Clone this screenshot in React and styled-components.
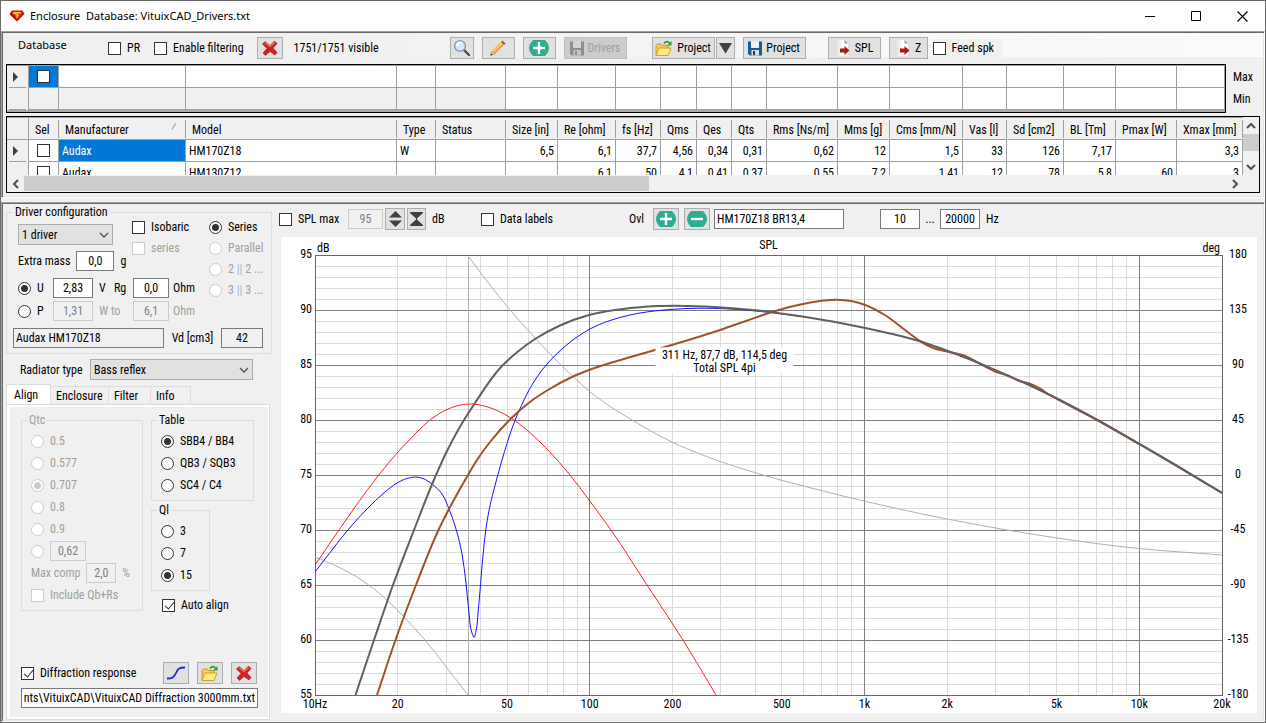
import React, { useEffect, useRef, useState } from "react";
import styled, { createGlobalStyle, css } from "styled-components";

const columns = [
  { name: "Sel", width: 30 },
  { name: "Manufacturer", width: 127, sorted: true },
  { name: "Model", width: 211 },
  { name: "Type", width: 39 },
  { name: "Status", width: 70 },
  { name: "Size [in]", width: 52, numeric: true },
  { name: "Re [ohm]", width: 58, numeric: true },
  { name: "fs [Hz]", width: 45, numeric: true },
  { name: "Qms", width: 36, numeric: true },
  { name: "Qes", width: 35, numeric: true },
  { name: "Qts", width: 35, numeric: true },
  { name: "Rms [Ns/m]", width: 71, numeric: true },
  { name: "Mms [g]", width: 52, numeric: true },
  { name: "Cms [mm/N]", width: 73, numeric: true },
  { name: "Vas [l]", width: 44, numeric: true },
  { name: "Sd [cm2]", width: 57, numeric: true },
  { name: "BL [Tm]", width: 52, numeric: true },
  { name: "Pmax [W]", width: 61, numeric: true },
  { name: "Xmax [mm]", numeric: true },
];

const drivers = [
  ["Audax", "HM170Z18", "W", "", "6,5", "6,1", "37,7", "4,56", "0,34", "0,31", "0,62", "12", "1,5", "33", "126", "7,17", "", "3,3"],
  ["Audax", "HM130Z12", "", "", "", "6,1", "50", "4,1", "0,41", "0,37", "0,55", "7,2", "1,41", "12", "78", "5,8", "60", "3"],
];

const curves = [
  {
    name: "Phase, low",
    color: "#b0b0b0",
    width: 1,
    points: [[315, 557], [333, 564.5], [352, 574], [370, 586], [388, 601], [403, 616], [425, 640], [447, 668], [468, 695]],
  },
  {
    name: "Phase",
    color: "#b0b0b0",
    width: 1,
    points: [[469, 257], [480, 272], [510, 310], [535, 338], [553, 357], [573, 376.5], [589, 391], [632, 420], [670, 441], [716, 460], [763, 475], [823, 491], [864, 501], [947, 519], [1007, 530], [1057, 538], [1096, 543.5], [1139, 548.5], [1222, 555]],
  },
  {
    name: "Port",
    color: "#ff2020",
    width: 1,
    points: [[315, 565], [339, 530], [378, 476], [391, 460], [417, 432], [430, 420], [447, 409.5], [457, 405.8], [469, 404], [481, 405.2], [497, 410.5], [511, 418], [528, 431], [548, 450], [570, 475], [589, 500], [611, 530], [647, 585], [683, 640], [716, 695]],
  },
  {
    name: "Driver",
    color: "#1414ff",
    width: 1,
    points: [[315, 572], [332, 550], [347, 531], [367, 509], [385, 492], [397, 483], [407, 478.5], [416, 477], [423, 478.5], [432, 484], [442, 494], [449, 509], [456, 529], [462, 554], [466, 583], [469, 613], [472, 633], [474, 637.5], [476, 631], [478, 613], [480.5, 585], [484, 545], [488.5, 513], [497, 478], [502, 460], [507, 443.5], [515.5, 419], [521, 406.5], [528.5, 391], [547, 364], [563, 348], [577, 337], [589, 329.5], [610, 320.5], [630, 315], [650, 311.5], [670, 309.5], [699, 308.2], [726, 308.8], [756, 311], [776, 313.2], [804, 316.8]],
  },
  {
    name: "Total SPL 4pi",
    color: "#a0522d",
    width: 2,
    points: [[377, 695], [395.5, 640], [416, 585], [438.5, 530], [468, 475], [477, 460], [490, 442], [511, 418.5], [528, 403.5], [547, 390.5], [573, 376.5], [589, 370], [617, 361], [653, 350.5], [695, 338], [720, 330], [746, 321], [772, 312], [804, 303.7], [822, 300.8], [837, 299.8], [851, 301], [864.5, 304.7], [884, 314.5], [907, 331.5], [924, 343.5], [936, 349], [948, 351.8], [965, 356], [981, 364.3], [995, 371.5], [1008, 375.7], [1018, 380.5], [1029, 383.5], [1041, 389], [1048, 394], [1057, 399], [1097, 420], [1139, 444], [1222, 493]],
  },
  {
    name: "Half space SPL",
    color: "#606060",
    width: 2,
    points: [[355.5, 695], [374, 640], [393, 585], [414, 530], [436, 475], [448, 449], [464, 420], [474, 404.5], [502, 366], [518, 351.5], [535, 339], [560, 325.5], [589, 315], [617, 309.7], [645, 306.7], [675, 305.8], [705, 306.6], [753, 310], [804, 316.8], [864, 327.7], [924, 342.5], [948, 351], [995, 369.8], [1029, 385], [1057, 398.5], [1097, 419.7], [1139, 443.7], [1193, 475.3], [1222, 493]],
  },
];

// Hermite spline with tangents weighted by the distance between the points
function smoothPath(points) {
  const step = points.slice(1).map((p, i) => Math.hypot(p[0] - points[i][0], p[1] - points[i][1]));
  const slope = (i, axis) => (points[i + 1][axis] - points[i][axis]) / step[i];
  const tangent = (i, axis) => {
    if (i === 0) return slope(0, axis);
    if (i === points.length - 1) return slope(i - 1, axis);
    return (slope(i - 1, axis) * step[i] + slope(i, axis) * step[i - 1]) / (step[i - 1] + step[i]);
  };
  let d = `M${points[0].join(" ")}`;
  step.forEach((length, i) => {
    const c1 = [0, 1].map((axis) => (points[i][axis] + (tangent(i, axis) * length) / 3).toFixed(1));
    const c2 = [0, 1].map((axis) => (points[i + 1][axis] - (tangent(i + 1, axis) * length) / 3).toFixed(1));
    d += `C${c1.join(" ")} ${c2.join(" ")} ${points[i + 1].join(" ")}`;
  });
  return d;
}

/* ---------- icons ---------- */

const GemIcon = () => (
  <svg width="16" height="16" viewBox="0 0 16 16">
    <path d="M3 2.5h10.500l2 3.500L8 13.500 .500 6z" fill="#c8140a" />
    <path d="M.5 6h4.500L8 13z" fill="#8e0d06" />
    <path d="M4 3.500h8l1.500 2.500L8 11.500 2.800 6z" fill="#e8280e" />
    <path d="M4.500 4h7.500l-.5 1.500H6.500l3.500 1.500-2 3.500-1-2.500 1-.8L4 5.500z" fill="#ffd02a" />
  </svg>
);

const CrossIcon = () => (
  <svg width="18" height="18" viewBox="0 0 18 18">
    <path d="M4 2.500 9 6.500l4.500-4.500 2.500 2.500-4 4.500 4 4.500-2 2.500-5-3.500-4.500 4-2.500-2.500 4-4.500L1.500 5z" fill="#cf2222" stroke="#a51414" strokeWidth=".6" strokeLinejoin="round" />
    <path d="M4 3.500 9 7.500l4.500-4" fill="none" stroke="#ee7a74" strokeWidth="1.200" />
  </svg>
);

const SearchIcon = () => (
  <svg width="18" height="18" viewBox="0 0 18 18">
    <path d="m11 11 5 5" stroke="#4a4a4a" strokeWidth="2.400" strokeLinecap="round" />
    <circle cx="7" cy="7" r="5.400" fill="#d6e6fb" stroke="#8c94b8" strokeWidth="1.400" />
    <path d="M3.800 7A3.500 3.500 0 0 1 9 4" fill="none" stroke="#fff" strokeWidth="1.600" />
  </svg>
);

const PencilIcon = () => (
  <svg width="18" height="18" viewBox="0 0 18 18">
    <path d="m1.500 16.500 1.500-4.500 3 3z" fill="#e9c9a0" stroke="#8a6a4a" strokeWidth=".5" />
    <path d="m1.500 16.500.7-2 1.300 1.300z" fill="#333" />
    <path d="M3 12 12 3l3 3-9 9z" fill="#f0a030" />
    <path d="m4 13 9-9" stroke="#ffd58a" strokeWidth="1.200" />
    <path d="m12 3 1.500-1.500 3 3L15 6z" fill="#a05a48" />
  </svg>
);

const RoundIcon = ({ minus }) => (
  <svg width="20" height="16" viewBox="0 0 20 16">
    <path d="M4 0h12q4 4 4 8t-4 8H4Q0 12 0 8t4-8z" fill="#2eae90" />
    <path d={minus ? "M4 8h12" : "M4 8h12M10 2v12"} stroke="#fff" strokeWidth="2.400" />
  </svg>
);

const FloppyIcon = ({ disabled }) => (
  <svg width="14" height="15" viewBox="0 0 14 15">
    <path d="M0 .5h3V7h8V.5h3v14H2L0 13z" fill={disabled ? "#8e8e8e" : "#1d5a8e"} />
    <path d="M3 .5h8v6H3z" fill={disabled ? "#d4d4d4" : "#eef5fa"} />
    <path d="M3.500 9h7.500v5.500H3.500z" fill={disabled ? "#c4c4c4" : "#d4dee6"} />
    <path d="M5 10h2v4H5z" fill={disabled ? "#8e8e8e" : "#17405f"} />
  </svg>
);

const FolderIcon = () => (
  <svg width="18" height="17" viewBox="0 0 18 17">
    <path d="M1 15V5.500L2.500 4H6l1.500 1.500H13V8" fill="#f3cf55" stroke="#b98a14" strokeWidth=".8" />
    <path d="M1 15.500 4 8h12l-3 7.500z" fill="#ffe784" stroke="#c2921a" strokeWidth=".8" strokeLinejoin="round" />
    <path d="M9 3.500c1.500-2.500 4-2.500 5.500-.5" fill="none" stroke="#2c9a2c" strokeWidth="1.700" />
    <path d="M16.500 1v4.500H12z" fill="#2c9a2c" />
  </svg>
);

const ExportIcon = () => (
  <svg width="16" height="17" viewBox="0 0 16 17">
    <defs>
      <linearGradient id="sheet" x1="0" x2="1">
        <stop offset="0" stopColor="#dcdcdc" />
        <stop offset=".6" stopColor="#fff" />
      </linearGradient>
    </defs>
    <path d="M0 0h9.500L13 3.500V16H0z" fill="url(#sheet)" />
    <path d="M9.500 0 13 3.500H9.500z" fill="#9a9a9a" />
    <path d="M5 8.500h4.500V6L14.500 10.500 9.500 15v-2.500H5z" fill="#b01818" />
  </svg>
);

const CurveIcon = () => (
  <svg width="20" height="14" viewBox="0 0 20 14">
    <path d="M1 12.500c5 0 7-1 9-5.500s3.500-5.500 9-5.500" fill="none" stroke="#2222f0" strokeWidth="1.800" />
  </svg>
);

const DownIcon = () => (
  <svg width="13" height="11" viewBox="0 0 13 11">
    <path d="M0 0h13L6.500 10.500z" fill="#404040" />
  </svg>
);

const SpreadIcon = () => (
  <svg width="13" height="16" viewBox="0 0 13 16">
    <path d="M0 6.500 6.500 0 13 6.500zM0 9.500h13L6.500 16z" fill="#404040" />
  </svg>
);

const FitIcon = () => (
  <svg width="13" height="16" viewBox="0 0 13 16">
    <path d="M0 1h13v1L7 7.500v1L13 14v1H0v-1l6-5.500v-1L0 2z" fill="#404040" />
  </svg>
);

const Chevron = ({ dir = "down", bold }) => {
  const d = { down: "m1 3 4 4 4-4", up: "m1 7 4-4 4 4", left: "M7 1 3 5l4 4", right: "m3 1 4 4-4 4" }[dir];
  return (
    <svg width="10" height="10" viewBox="0 0 10 10">
      <path d={d} fill="none" stroke="#505050" strokeWidth={bold ? 2 : 1.3} />
    </svg>
  );
};

/* ---------- small parts ---------- */

function Check({ children, ...rest }) {
  return (
    <StOption disabled={rest.disabled}>
      <StTick type="checkbox" {...rest} />
      <span>{children}</span>
    </StOption>
  );
}

function Radio({ children, ...rest }) {
  return (
    <StOption disabled={rest.disabled}>
      <StDot type="radio" {...rest} />
      <span>{children}</span>
    </StOption>
  );
}

function Select({ width, options, ...rest }) {
  return (
    <StSelectWrapper width={width}>
      <select {...rest}>
        {options.map((option) => (
          <option key={option}>{option}</option>
        ))}
      </select>
      <Chevron />
    </StSelectWrapper>
  );
}

function ColumnSizes() {
  return (
    <colgroup>
      <StCol width={22} />
      {columns.map((column) => (
        <StCol key={column.name} width={column.width} />
      ))}
    </colgroup>
  );
}

function FilterGrid() {
  return (
    <StFilterRow>
      <StGridFrame>
        <StTable aria-label="Filter limits">
          <ColumnSizes />
          <tbody>
            <tr>
              <StRowHead>
                <StMarker />
              </StRowHead>
              <StCell selected center>
                <StTick type="checkbox" aria-label="Selected only" />
              </StCell>
              {columns.slice(1).map((column) => (
                <StCell key={column.name} />
              ))}
            </tr>
            <tr>
              <StRowHead />
              {columns.map((column) => (
                <StCell key={column.name} shaded={!column.numeric} />
              ))}
            </tr>
          </tbody>
        </StTable>
        <StGridFiller />
      </StGridFrame>
      <StLimits>
        <span>Max</span>
        <span>Min</span>
      </StLimits>
    </StFilterRow>
  );
}

function DriverGrid() {
  return (
    <StDriverFrame>
      <StViewport>
        <StTable aria-label="Drivers">
          <ColumnSizes />
          <thead>
            <tr>
              <StCorner aria-label="Row" />
              {columns.map((column) => (
                <StHeadCell key={column.name}>
                  <div>
                    {column.name}
                    {column.sorted && (
                      <svg width="6" height="7" viewBox="0 0 6 7">
                        <path d="M1 6.500 4.500.5" stroke="#8a8a8a" />
                      </svg>
                    )}
                  </div>
                </StHeadCell>
              ))}
            </tr>
          </thead>
          <tbody>
            {drivers.map((driver, row) => (
              <tr key={driver[1]}>
                <StRowHead>{row === 0 && <StMarker />}</StRowHead>
                <StCell center>
                  <StTick type="checkbox" aria-label={"Select " + driver[1]} />
                </StCell>
                {driver.map((value, i) => (
                  <StCell key={columns[i + 1].name} numeric={columns[i + 1].numeric} selected={row === 0 && i === 0}>
                    {value}
                  </StCell>
                ))}
              </tr>
            ))}
          </tbody>
        </StTable>
      </StViewport>
      <StVScroll>
        <button aria-label="Scroll up">
          <Chevron dir="up" bold />
        </button>
        <StVThumb />
        <button aria-label="Scroll down">
          <Chevron bold />
        </button>
      </StVScroll>
      <StHScroll>
        <button aria-label="Scroll left">
          <Chevron dir="left" bold />
        </button>
        <StHTrack>
          <StHThumb />
        </StHTrack>
        <button aria-label="Scroll right">
          <Chevron dir="right" bold />
        </button>
      </StHScroll>
    </StDriverFrame>
  );
}

function DriverConfiguration() {
  return (
    <StGroup>
      <legend>Driver configuration</legend>
      <StConfigBody>
        <StConfigMain>
          <StConfigTop>
            <StConfigLeft>
              <Select width={95} options={["1 driver", "2 drivers"]} aria-label="Number of drivers" />
              <StField>
                <label htmlFor="mass">Extra mass</label>
                <StInput id="mass" width={38} defaultValue="0,0" />
                <span>g</span>
              </StField>
            </StConfigLeft>
            <StOptionColumn>
              <Check>Isobaric</Check>
              <Check disabled>series</Check>
            </StOptionColumn>
          </StConfigTop>
          <StSourceRow>
            <Radio name="source" defaultChecked>
              U
            </Radio>
            <StInput width={40} defaultValue="2,83" aria-label="Voltage" />
            <span>V</span>
            <label htmlFor="rg">Rg</label>
            <StInput id="rg" width={36} defaultValue="0,0" />
            <span>Ohm</span>
          </StSourceRow>
          <StSourceRow muted>
            <Radio name="source">
              <StStrong>P</StStrong>
            </Radio>
            <StInput width={40} defaultValue="1,31" aria-label="Power" disabled />
            <label htmlFor="load">W to</label>
            <i />
            <StInput id="load" width={36} defaultValue="6,1" disabled />
            <span>Ohm</span>
          </StSourceRow>
        </StConfigMain>
        <StOptionColumn>
          <Radio name="wiring" defaultChecked>
            Series
          </Radio>
          <Radio name="wiring" disabled>
            Parallel
          </Radio>
          <Radio name="wiring" disabled>
            2 <StBars>||</StBars> 2 ...
          </Radio>
          <Radio name="wiring" disabled>
            3 <StBars>||</StBars> 3 ...
          </Radio>
        </StOptionColumn>
      </StConfigBody>
      <StNameRow>
        <StInput width={151} left defaultValue="Audax HM170Z18" readOnly aria-label="Driver" />
        <label htmlFor="vd">Vd [cm3]</label>
        <StInput id="vd" width={42} defaultValue="42" readOnly />
      </StNameRow>
    </StGroup>
  );
}

function AlignTab() {
  const fileRef = useRef(null);

  // keep the file name in view, not the start of its path
  useEffect(() => {
    fileRef.current.scrollLeft = fileRef.current.scrollWidth;
  }, []);

  return (
    <StTabPage>
      <StTabContent>
        <StAlignGroups>
          <StListGroup width={122} muted>
            <legend>Qtc</legend>
            {["0.5", "0.577", "0.707", "0.8", "0.9"].map((value) => (
              <Radio key={value} name="qtc" defaultChecked={value === "0.707"} disabled>
                {value}
              </Radio>
            ))}
            <StField>
              <StDot type="radio" name="qtc" aria-label="Custom Qtc" disabled />
              <StInput width={36} defaultValue="0,62" aria-label="Qtc value" disabled />
            </StField>
            <StField>
              <label htmlFor="comp">Max comp</label>
              <StInput id="comp" width={30} defaultValue="2,0" disabled />
              <span>%</span>
            </StField>
            <Check disabled>Include Qb+Rs</Check>
          </StListGroup>
          <StAlignColumn>
            <StListGroup width={103}>
              <legend>Table</legend>
              {["SBB4 / BB4", "QB3 / SQB3", "SC4 / C4"].map((value, i) => (
                <Radio key={value} name="table" defaultChecked={i === 0}>
                  {value}
                </Radio>
              ))}
            </StListGroup>
            <StListGroup width={59}>
              <legend>Ql</legend>
              {["3", "7", "15"].map((value) => (
                <Radio key={value} name="ql" defaultChecked={value === "15"}>
                  {value}
                </Radio>
              ))}
            </StListGroup>
            <StAutoAlign>
              <Check defaultChecked>Auto align</Check>
            </StAutoAlign>
          </StAlignColumn>
        </StAlignGroups>
        <StDiffraction>
          <StDiffractionRow>
            <Check defaultChecked>Diffraction response</Check>
            <StButton width={26} aria-label="Show response">
              <CurveIcon />
            </StButton>
            <StButton width={26} aria-label="Open response">
              <FolderIcon />
            </StButton>
            <StButton width={26} aria-label="Clear response">
              <CrossIcon />
            </StButton>
          </StDiffractionRow>
          <StInput ref={fileRef} width={237} left defaultValue="ents\VituixCAD\VituixCAD Diffraction 3000mm.txt" aria-label="Response file" />
        </StDiffraction>
      </StTabContent>
    </StTabPage>
  );
}

const margin = { left: 34, top: 18, right: 35, bottom: 18 };
const freqLabels = [[10, "10Hz"], [20, "20"], [50, "50"], [100, "100"], [200, "200"], [500, "500"], [1000, "1k"], [2000, "2k"], [5000, "5k"], [10000, "10k"], [20000, "20k"]];

function SplChart() {
  const ref = useRef(null);
  const [size, setSize] = useState({ width: 976, height: 476 });

  useEffect(() => {
    const observer = new ResizeObserver(([entry]) => {
      const { width, height } = entry.contentRect;
      setSize({ width, height });
    });
    observer.observe(ref.current);
    return () => observer.disconnect();
  }, []);

  const plotWidth = size.width - margin.left - margin.right;
  const plotHeight = size.height - margin.top - margin.bottom;
  const right = margin.left + plotWidth;
  const bottom = margin.top + plotHeight;
  const fx = (hz) => margin.left + (Math.log10(hz / 10) / Math.log10(2000)) * plotWidth;
  const dy = (db) => margin.top + ((95 - db) / 40) * plotHeight;

  const freqs = [];
  for (let decade = 10; decade <= 10000; decade *= 10) {
    for (let n = 1; n < 10; n++) {
      if (decade * n > 10 && decade * n < 20000) freqs.push(decade * n);
    }
  }
  const levels = Array.from({ length: 39 }, (_, i) => 56 + i);
  const majorFreqs = [100, 1000, 10000];
  const majorLevels = [60, 65, 70, 75, 80, 85, 90];
  const tipX = margin.left + plotWidth * 0.4515;
  const tipY = dy(87.7);

  return (
    <StChart ref={ref}>
      <svg width={size.width} height={size.height} role="img" aria-label="SPL">
        <g stroke="#dcdcdc" shapeRendering="crispEdges">
          {freqs.map((hz) => (
            <line key={hz} x1={Math.floor(fx(hz)) + 0.5} x2={Math.floor(fx(hz)) + 0.5} y1={margin.top} y2={bottom} />
          ))}
          {levels.map((db) => (
            <line key={db} x1={margin.left} x2={right} y1={Math.floor(dy(db)) + 0.5} y2={Math.floor(dy(db)) + 0.5} />
          ))}
        </g>
        <g stroke="#808080" shapeRendering="crispEdges">
          {majorFreqs.map((hz) => (
            <line key={hz} x1={Math.floor(fx(hz)) + 0.5} x2={Math.floor(fx(hz)) + 0.5} y1={margin.top} y2={bottom} />
          ))}
          {majorLevels.map((db) => (
            <line key={db} x1={margin.left} x2={right} y1={Math.floor(dy(db)) + 0.5} y2={Math.floor(dy(db)) + 0.5} />
          ))}
        </g>
        <rect x={margin.left + 0.5} y={margin.top + 0.5} width={plotWidth} height={plotHeight} fill="none" stroke="#696969" shapeRendering="crispEdges" />
        <svg x={margin.left} y={margin.top} width={plotWidth} height={plotHeight} viewBox="315 255 907 440" preserveAspectRatio="none">
          <path d="M468.500 257V695" stroke="#b0b0b0" />
          {curves.map((curve) => (
            <path key={curve.name} d={smoothPath(curve.points)} fill="none" stroke={curve.color} strokeWidth={curve.width} vectorEffect="non-scaling-stroke" />
          ))}
        </svg>
        <rect x={tipX - 69} y={tipY + 12} width="138" height="26" fill="#fff" />
        <g textAnchor="middle">
          <text x={tipX} y={tipY + 24}>311 Hz, 87,7 dB, 114,5 deg</text>
          <text x={tipX} y={tipY + 37}>Total SPL 4pi</text>
          <text x={margin.left + plotWidth / 2} y="12">SPL</text>
          {freqLabels.map(([hz, label]) => (
            <text key={hz} x={fx(hz)} y={bottom + 13}>{label}</text>
          ))}
          {[180, 135, 90, 45, 0, -45, -90, -135, -180].map((deg, i) => (
            <text key={deg} x={right + 16} y={dy(95 - i * 5) + 3}>{deg}</text>
          ))}
        </g>
        <text x={margin.left + 2} y="15">dB</text>
        <g textAnchor="end">
          <text x={right - 2} y="15">deg</text>
          {[95, 90, 85, 80, 75, 70, 65, 60, 55].map((db) => (
            <text key={db} x={margin.left - 3} y={dy(db) + 3}>{db}</text>
          ))}
        </g>
      </svg>
    </StChart>
  );
}

function App() {
  return (
    <StWindow>
      <GlobalStyle />
      <StTitleBar>
        <GemIcon />
        <h1>Enclosure&nbsp; Database: VituixCAD_Drivers.txt</h1>
        <StWindowButton aria-label="Minimize">
          <svg width="11" height="11" viewBox="0 0 11 11">
            <path d="M0 5.500h10" stroke="#000" />
          </svg>
        </StWindowButton>
        <StWindowButton aria-label="Maximize">
          <svg width="11" height="11" viewBox="0 0 11 11">
            <path d="M.5.500h9v9h-9z" fill="none" stroke="#000" />
          </svg>
        </StWindowButton>
        <StWindowButton aria-label="Close">
          <svg width="11" height="11" viewBox="0 0 11 11">
            <path d="m.5.500 10 10m0-10-10 10" stroke="#000" strokeWidth="1.100" />
          </svg>
        </StWindowButton>
      </StTitleBar>

      <StPanel>
        <StToolbar>
          <StToolbarTitle>Database</StToolbarTitle>
          <StToolSet start={42}>
            <Check>PR</Check>
          </StToolSet>
          <StToolSet start={14}>
            <Check>Enable filtering</Check>
          </StToolSet>
          <StToolSet start={13}>
            <StButton width={26} aria-label="Clear filter">
              <CrossIcon />
            </StButton>
          </StToolSet>
          <StCount>1751/1751 visible</StCount>
          <StToolSet>
            <StButton width={24} aria-label="Search">
              <SearchIcon />
            </StButton>
            <StButton width={33} aria-label="Edit">
              <PencilIcon />
            </StButton>
            <StButton width={33} aria-label="Add">
              <RoundIcon />
            </StButton>
            <StButton width={63} disabled>
              <FloppyIcon disabled />
              Drivers
            </StButton>
          </StToolSet>
          <StToolSet start={25}>
            <StSplit>
              <StButton width={63}>
                <FolderIcon />
                Project
              </StButton>
              <StButton width={19} aria-label="Recent projects">
                <DownIcon />
              </StButton>
            </StSplit>
            <StButton width={63}>
              <FloppyIcon />
              Project
            </StButton>
          </StToolSet>
          <StToolSet start={22}>
            <StButton width={53}>
              <ExportIcon />
              SPL
            </StButton>
            <StButton width={39}>
              <ExportIcon />Z
            </StButton>
          </StToolSet>
          <StFeed>
            <Check>Feed spk</Check>
          </StFeed>
        </StToolbar>
        <FilterGrid />
        <DriverGrid />
      </StPanel>

      <StLowerPanel>
        <StSidebar>
          <DriverConfiguration />
          <StRadiator>
            <label htmlFor="radiator">Radiator type</label>
            <Select id="radiator" width={163} options={["Bass reflex", "Closed"]} />
          </StRadiator>
          <StTabs role="tablist">
            <StTab role="tab" width={45} active>
              Align
            </StTab>
            <StTab role="tab" width={58}>
              Enclosure
            </StTab>
            <StTab role="tab" width={42}>
              Filter
            </StTab>
            <StTab role="tab" width={40}>
              Info
            </StTab>
          </StTabs>
          <AlignTab />
        </StSidebar>

        <StMain>
          <StChartBar>
            <StBarSet width={69}>
              <Check>SPL max</Check>
            </StBarSet>
            <StBarSet width={133}>
              <StInput width={35} defaultValue="95" aria-label="SPL max value" disabled />
              <StButton width={20} aria-label="Step">
                <SpreadIcon />
              </StButton>
              <StButton width={19} aria-label="Fit">
                <FitIcon />
              </StButton>
              <StUnit>dB</StUnit>
            </StBarSet>
            <StBarSet width={148}>
              <Check>Data labels</Check>
            </StBarSet>
            <StBarSet width={251}>
              <StUnitBefore htmlFor="overlay">Ovl</StUnitBefore>
              <StOverlayButtons>
                <StButton width={26} aria-label="Add overlay">
                  <RoundIcon />
                </StButton>
                <StButton width={26} aria-label="Remove overlay">
                  <RoundIcon minus />
                </StButton>
              </StOverlayButtons>
              <StInput id="overlay" width={130} left defaultValue="HM170Z18 BR13,4" />
            </StBarSet>
            <StBarSet>
              <StInput width={40} defaultValue="10" aria-label="Lowest frequency" />
              <StDots>...</StDots>
              <StInput width={40} defaultValue="20000" aria-label="Highest frequency" />
              <StUnit>Hz</StUnit>
            </StBarSet>
          </StChartBar>
          <SplChart />
        </StMain>
      </StLowerPanel>
    </StWindow>
  );
}

/* ---------- styles ---------- */

const GlobalStyle = createGlobalStyle`
  * { box-sizing: border-box; }
  body {
    margin: 0;
    background: #f0f0f0;
    color: #000;
    font-family: "Roboto Condensed", "Liberation Sans", sans-serif;
    font-size: 12px;
    line-height: 14px;
  }
  button, input, select {
    margin: 0;
    font: inherit;
    color: inherit;
  }
  svg { display: block; flex: none; }
`;

const StWindow = styled.div`
  display: flex;
  flex-direction: column;
  min-height: 100vh;
  border: 1px solid #6a6a6a;
`;

const StTitleBar = styled.header`
  display: flex;
  align-items: center;
  height: 30px;
  padding-left: 8px;
  background: #fff;
  h1 {
    flex: 1;
    margin: 0 0 0 5px;
    font-family: "Noto Sans", sans-serif;
    font-size: 11px;
    font-weight: 400;
  }
`;

const StWindowButton = styled.button`
  display: grid;
  place-items: center;
  width: 46px;
  height: 30px;
  padding: 0;
  border: 0;
  background: none;
`;

const StPanel = styled.section`
  border: 1px solid;
  border-color: #a0a0a0 #fff #fff #a0a0a0;
  box-shadow: inset 1px 1px #696969, inset -1px -1px #e3e3e3;
  padding: 1px 1px 4px;
`;

const StToolbar = styled.div`
  display: flex;
  align-items: center;
  height: 31px;
  padding: 0 0 1px 14px;
  margin-left: 1px;
  background: linear-gradient(90deg, #f0f0f0 20%, #fbfbfb) top / 100% 24px no-repeat;
`;

const StToolbarTitle = styled.h2`
  align-self: flex-start;
  width: 48px;
  margin: 5px 0 0;
  font-family: "Noto Sans", sans-serif;
  font-size: 11px;
  font-weight: 400;
`;

const StToolSet = styled.div`
  display: flex;
  align-items: center;
  gap: 8px;
  margin-left: ${({ start }) => start || 0}px;
`;

const StSplit = styled.div`
  display: flex;
  gap: 1px;
`;

const StCount = styled.span`
  width: 167px;
  padding-left: 11px;
`;

const StFeed = styled.div`
  display: flex;
  align-items: center;
  height: 18px;
  margin-left: 5px;
  padding-right: 8px;
  background: #f0f0f0;
`;

const StButton = styled.button`
  display: flex;
  flex: none;
  align-items: center;
  justify-content: center;
  gap: 4px;
  width: ${({ width }) => width}px;
  height: 22px;
  padding: 0;
  border: 1px solid #adadad;
  background: #e1e1e1;
  &:disabled {
    border-color: #bfbfbf;
    background: #cccccc;
    color: #a0a0a0;
  }
`;

const StOption = styled.label`
  display: flex;
  align-items: center;
  gap: 6px;
  white-space: nowrap;
  color: ${({ disabled }) => (disabled ? "#a0a0a0" : "inherit")};
`;

const StTick = styled.input`
  appearance: none;
  flex: none;
  display: block;
  width: 13px;
  height: 13px;
  border: 1px solid #333;
  background: #fff;
  &:checked::after {
    content: "";
    display: block;
    width: 4px;
    height: 8px;
    margin: 0 0 0 4px;
    border: solid #333;
    border-width: 0 1px 1px 0;
    transform: rotate(40deg);
  }
  &:disabled {
    border-color: #cccccc;
  }
`;

const StDot = styled(StTick)`
  border-radius: 50%;
  &:checked::after {
    width: 7px;
    height: 7px;
    margin: 2px;
    border: 0;
    border-radius: 50%;
    background: #333;
    transform: none;
  }
  &:disabled:checked::after {
    background: #cccccc;
  }
`;

const StInput = styled.input`
  flex: none;
  width: ${({ width }) => width}px;
  height: 20px;
  padding: 0 2px;
  border: 1px solid #7a7a7a;
  border-radius: 0;
  background: #fff;
  text-align: ${({ left }) => (left ? "left" : "center")};
  &:read-only {
    background: #f0f0f0;
  }
  &:disabled {
    border-color: #cccccc;
    background: #f0f0f0;
    color: #808080;
  }
`;

const StSelectWrapper = styled.div`
  position: relative;
  width: ${({ width }) => width}px;
  select {
    appearance: none;
    display: block;
    width: 100%;
    height: 21px;
    padding: 0 3px;
    border: 1px solid #adadad;
    border-radius: 0;
    background: #e1e1e1;
  }
  svg {
    position: absolute;
    right: 4px;
    top: 6px;
    pointer-events: none;
  }
`;

const StFilterRow = styled.div`
  display: flex;
  margin: 0 0 3px 3px;
`;

const StGridFrame = styled.div`
  flex: 1;
  min-width: 0;
  border: 1px solid #000;
  overflow: hidden;
`;

const StLimits = styled.div`
  display: flex;
  flex-direction: column;
  gap: 8px;
  width: 37px;
  padding: 6px 0 0 7px;
`;

const StGridFiller = styled.div`
  height: 2px;
  background: #ababab;
`;

const StTable = styled.table`
  width: 100%;
  table-layout: fixed;
  border-collapse: separate;
  border-spacing: 0;
  border-top: 1px solid #a0a0a0;
`;

const StCol = styled.col`
  width: ${({ width }) => (width ? width + "px" : "auto")};
`;

const StRowHead = styled.th`
  height: 22px;
  padding: 0 0 0 6px;
  border-right: 1px solid #a0a0a0;
  background: linear-gradient(#a0a0a0, #a0a0a0) 2px 100% / 17px 1px no-repeat #f0f0f0;
`;

const StMarker = styled.span`
  display: block;
  width: 0;
  border: solid transparent;
  border-width: 5px 0 5px 5px;
  border-left-color: #404040;
`;

const StCorner = styled.th`
  height: 22px;
  padding: 0;
  border: solid #a0a0a0;
  border-width: 0 1px 1px 0;
  background: #f0f0f0;
`;

const StCell = styled.td`
  height: 22px;
  padding: 0 3px;
  border: solid #a0a0a0;
  border-width: 0 1px 1px 0;
  background: ${({ shaded }) => (shaded ? "#f0f0f0" : "#fff")};
  white-space: nowrap;
  ${({ numeric }) => numeric && css`text-align: right;`}
  ${({ selected }) =>
    selected &&
    css`
      background: #0078d7;
      color: #fff;
    `}
  ${({ center }) =>
    center &&
    css`
      padding: 0 8px;
    `}
`;

const StHeadCell = styled.th`
  height: 22px;
  padding: 2px 0 0 6px;
  border-bottom: 1px solid #a0a0a0;
  background: linear-gradient(#a0a0a0, #a0a0a0) 100% 2px / 1px 18px no-repeat #f0f0f0;
  font-weight: 400;
  text-align: left;
  white-space: nowrap;
  div {
    display: flex;
    justify-content: space-between;
    padding-right: 9px;
  }
`;

const StDriverFrame = styled.div`
  display: grid;
  grid-template-columns: minmax(0, 1fr) 16px;
  margin: 0 3px 0 3px;
  border: 1px solid #000;
`;

const StViewport = styled.div`
  height: 58px;
  overflow: hidden;
`;

const StVScroll = styled.div`
  display: flex;
  flex-direction: column;
  button {
    display: grid;
    place-items: center;
    height: 17px;
    padding: 0;
    border: 0;
    background: #f0f0f0;
  }
  button:last-child {
    margin-top: auto;
  }
`;

const StVThumb = styled.div`
  height: 17px;
  background: #cdcdcd;
`;

const StHScroll = styled.div`
  display: flex;
  height: 17px;
  button {
    display: grid;
    place-items: center;
    width: 17px;
    padding: 0;
    border: 0;
    background: #f0f0f0;
  }
`;

const StHTrack = styled.div`
  flex: 1;
  padding: 1px 0;
`;

const StHThumb = styled.div`
  width: 52%;
  height: 15px;
  background: #cdcdcd;
`;

const StLowerPanel = styled(StPanel)`
  display: flex;
  flex: 1;
  margin-top: 4px;
  padding: 1px;
`;

const StSidebar = styled.aside`
  display: flex;
  flex: none;
  flex-direction: column;
  width: 269px;
  padding: 1px 0 0 3px;
`;

const StGroup = styled.fieldset`
  min-width: 0;
  margin: 0;
  padding: 0 6px 5px;
  border: 1px solid #dcdcdc;
  legend {
    padding: 0 2px;
  }
`;

const StConfigBody = styled.div`
  display: flex;
  padding-left: 5px;
`;

const StConfigMain = styled.div`
  flex: none;
  width: 191px;
`;

const StConfigTop = styled.div`
  display: flex;
  gap: 18px;
  margin-bottom: 7px;
`;

const StConfigLeft = styled.div`
  display: flex;
  flex-direction: column;
  gap: 6px;
  width: 96px;
  padding-top: 5px;
`;

const StOptionColumn = styled.div`
  display: flex;
  flex-direction: column;
  gap: 7px;
  padding-top: 1px;
`;

const StField = styled.div`
  display: flex;
  align-items: center;
  gap: 6px;
  white-space: nowrap;
`;

const StSourceRow = styled.div`
  display: grid;
  grid-template-columns: 35px 46px 15px 19px 40px auto;
  align-items: center;
  margin-bottom: 3px;
  white-space: nowrap;
  color: ${({ muted }) => (muted ? "#a0a0a0" : "inherit")};
`;

const StStrong = styled.span`
  color: #000;
`;

const StBars = styled.span`
  color: #9dbcd8;
`;

const StNameRow = styled.div`
  display: flex;
  align-items: center;
  justify-content: space-between;
  margin: 4px 2px 0 0;
`;

const StRadiator = styled.div`
  display: flex;
  align-items: center;
  justify-content: space-between;
  margin: 5px 19px 4px 14px;
`;

const StTabs = styled.div`
  display: flex;
  align-items: flex-end;
`;

const StTab = styled.button`
  width: ${({ width }) => width}px;
  height: ${({ active }) => (active ? 20 : 18)}px;
  padding: 0 0 0 5px;
  border: 1px solid #dcdcdc;
  border-width: 1px 1px 0 0;
  background: #f0f0f0;
  text-align: left;
  ${({ active }) =>
    active &&
    css`
      padding: 0 0 0 7px;
      border-left-width: 1px;
      background: #fff;
    `}
`;

const StTabPage = styled.div`
  display: flex;
  flex: 1;
  margin-right: 2px;
  padding: 2px 1px 2px 3px;
  border: 1px solid #dcdcdc;
  background: #fff;
`;

const StTabContent = styled.div`
  display: flex;
  flex: 1;
  flex-direction: column;
  padding: 6px 0 9px 11px;
  background: #f0f0f0;
`;

const StAlignGroups = styled.div`
  display: flex;
  align-items: flex-start;
  gap: 8px;
`;

const StAlignColumn = styled.div`
  display: flex;
  flex-direction: column;
  gap: 2px;
`;

const StListGroup = styled(StGroup)`
  width: ${({ width }) => width}px;
  padding: 3px 0 4px 9px;
  color: ${({ muted }) => (muted ? "#a0a0a0" : "inherit")};
  legend {
    margin-left: -4px;
  }
  ${StOption}, ${StField} {
    height: 22px;
  }
`;

const StAutoAlign = styled.div`
  padding: 5px 0 0 11px;
`;

const StDiffraction = styled.div`
  margin-top: auto;
`;

const StDiffractionRow = styled.div`
  display: flex;
  gap: 8px;
  width: 236px;
  margin-bottom: 4px;
  label {
    flex: 1;
  }
`;

const StMain = styled.main`
  display: flex;
  flex: 1;
  flex-direction: column;
  min-width: 0;
  padding: 4px 6px 7px 9px;
`;

const StChartBar = styled.div`
  display: flex;
  align-items: center;
  height: 22px;
  margin: 0 0 7px -2px;
`;

const StBarSet = styled.div`
  display: flex;
  align-items: center;
  gap: 2px;
  width: ${({ width }) => (width ? width + "px" : "auto")};
`;

const StUnit = styled.span`
  margin-left: 4px;
`;

const StUnitBefore = styled.label`
  width: 22px;
`;

const StOverlayButtons = styled.div`
  display: flex;
  gap: 5px;
  padding-right: 2px;
`;

const StDots = styled.span`
  width: 16px;
  text-align: center;
`;

const StChart = styled.div`
  flex: 1 0 300px;
  min-width: 0;
  overflow: hidden;
  background: #fff;
  position: relative;
  > svg {
    position: absolute;
    inset: 0;
  }
`;

export default App;
